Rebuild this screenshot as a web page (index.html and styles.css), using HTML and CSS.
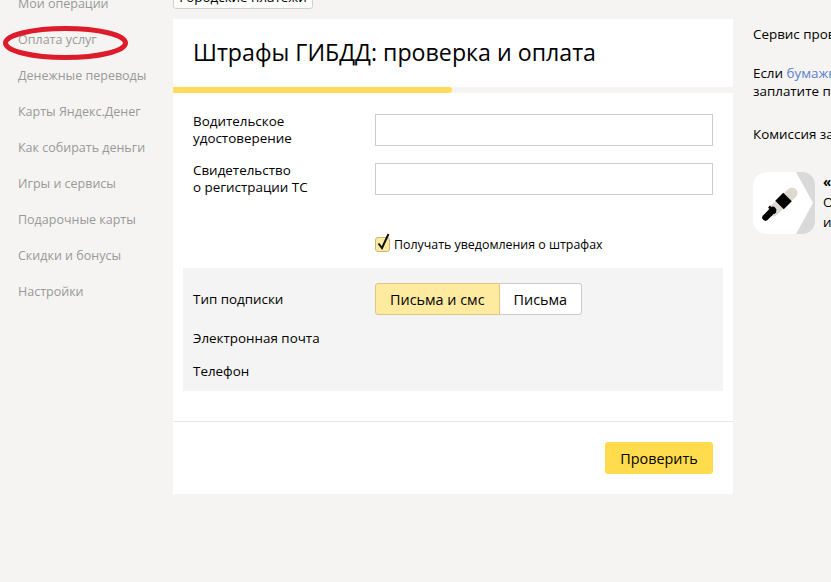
FILE: index.html
```html
<!DOCTYPE html>
<html lang="ru">
<head>
    <meta charset="UTF-8">
    <meta name="viewport" content="width=device-width, initial-scale=1.0">
    <title>Штрафы ГИБДД: проверка и оплата</title>
    <link rel="stylesheet" href="styles.css">
</head>
<body>
    <div class="page">
        <div class="sidebar">
            <a class="nav-item">Мои операции</a>
            <a class="nav-item">Оплата услуг</a>
            <a class="nav-item">Денежные переводы</a>
            <a class="nav-item">Карты Яндекс.Денег</a>
            <a class="nav-item">Как собирать деньги</a>
            <a class="nav-item">Игры и сервисы</a>
            <a class="nav-item">Подарочные карты</a>
            <a class="nav-item">Скидки и бонусы</a>
            <a class="nav-item">Настройки</a>
        </div>
        <div class="main">
            <button class="city-button">Городские платежи</button>
            <div class="card">
                <h1 class="card-title">Штрафы ГИБДД: проверка и оплата</h1>
                <div class="progress"><div class="progress-fill"></div></div>
                <div class="form">
                    <div class="form-row">
                        <label class="form-label">Водительское<br>удостоверение</label>
                        <input class="text-input" type="text">
                    </div>
                    <div class="form-row">
                        <label class="form-label">Свидетельство<br>о регистрации ТС</label>
                        <input class="text-input" type="text">
                    </div>
                    <div class="notify-row">
                        <span class="checkbox">
                            <svg viewBox="0 0 16 20" width="16" height="20" fill="none">
                                <path d="M3.5 11.5l3.5 4.5 6.5-14" stroke="#111" stroke-width="2"/>
                            </svg>
                        </span>
                        Получать уведомления о штрафах
                    </div>
                    <div class="subscribe">
                        <div class="subscribe-row">
                            <span class="subscribe-label">Тип подписки</span>
                            <div class="switch">
                                <span class="switch-item switch-item-on">Письма и смс</span>
                                <span class="switch-item">Письма</span>
                            </div>
                        </div>
                        <div class="subscribe-line">Электронная почта</div>
                        <div class="subscribe-line">Телефон</div>
                    </div>
                </div>
                <div class="card-footer">
                    <button class="submit">Проверить</button>
                </div>
            </div>
        </div>
        <div class="aside">
            <p>Сервис проверит штрафы</p>
            <p class="aside-note">Если <a class="link">бумажная</a> квитанция потеряна,<br>заплатите по номеру</p>
            <p>Комиссия за оплату</p>
            <div class="promo">
                <svg class="promo-icon" viewBox="0 0 62 62" width="62" height="62">
                    <rect width="62" height="62" rx="13" fill="#d9d9d9"/>
                    <path d="M13 0H43L60 31 43 62H13A13 13 0 0 1 0 49V13A13 13 0 0 1 13 0Z" fill="#fff"/>
                    <path d="M39 21L20 39" stroke="#dcd9d0" stroke-width="11" stroke-linecap="round"/>
                    <path d="M34.5 25L26.5 33" stroke="#000" stroke-width="12"/>
                    <path d="M20 38L12.5 45.5" stroke="#000" stroke-width="6.5" stroke-linecap="round"/>
                    <path d="M22.5 41L16 34.5" stroke="#000" stroke-width="2.5"/>
                </svg>
                <div class="promo-text">
                    <b>«Штрафы»</b><br>Оплата<br>из приложения
                </div>
            </div>
        </div>
    </div>
    <svg class="marker" viewBox="0 0 131 36" width="131" height="36" fill="none">
        <ellipse cx="65.5" cy="17" rx="60" ry="14.5" stroke="#dc1c2a" stroke-width="5"/>
    </svg>
</body>
</html>
```

FILE: styles.css
```css
* {
    box-sizing: border-box;
    margin: 0;
    padding: 0;
}

html, body {
    height: 100%;
    overflow: hidden;
}

body {
    font-family: "Open Sans", "Noto Sans", sans-serif;
    font-size: 13.4px;
    background-color: #f5f4f2;
    color: #000;
    position: relative;
}

.page {
    display: flex;
    align-items: flex-start;
    margin-top: -15px;
    width: 1100px;
}

.sidebar {
    width: 173px;
    flex-shrink: 0;
    padding: 10px 0 0 18px;
    display: flex;
    flex-direction: column;
    font-size: 12.5px;
}

.nav-item {
    height: 36px;
    line-height: 18px;
    color: #999;
}

.main {
    width: 560px;
    flex-shrink: 0;
}

.city-button {
    display: block;
    width: 140px;
    height: 24px;
    margin-bottom: 10px;
    background-color: #fff;
    border: 1px solid #d0d0d0;
    border-radius: 3px;
    font: inherit;
    color: #000;
}

.card {
    background-color: #fff;
}

.card-title {
    font-size: 23.2px;
    font-weight: 400;
    line-height: 32px;
    padding: 17px 20px 19px;
}

.progress {
    height: 6px;
    background-color: #f5f4f2;
}

.progress-fill {
    width: 279px;
    height: 100%;
    background-color: #ffdb5c;
    border-radius: 0 3px 3px 0;
}

.form {
    padding: 21px 10px 30px;
}

.form-row {
    display: flex;
    margin-bottom: 16px;
    padding: 0 10px;
}

.form-label {
    width: 182px;
    flex-shrink: 0;
    line-height: 17px;
    margin-top: -1px;
}

.text-input {
    width: 338px;
    height: 32px;
    border: 1px solid #ccc;
    background-color: #fff;
}

.notify-row {
    display: flex;
    align-items: center;
    gap: 4px;
    height: 24px;
    margin: 36px 0 12px 192px;
    font-size: 12.4px;
}

.checkbox {
    width: 15px;
    height: 15px;
    background-color: #ffeba0;
    border: 1px solid #c8b97a;
    border-radius: 3px;
    position: relative;
}

.checkbox svg {
    position: absolute;
    left: -1px;
    top: -6px;
}

.subscribe {
    background-color: #f4f4f4;
    padding: 15px 10px 3px;
}

.subscribe-row {
    display: flex;
    align-items: center;
    margin-bottom: 7px;
}

.subscribe-label {
    width: 182px;
    flex-shrink: 0;
}

.switch {
    display: flex;
    height: 32px;
    font-size: 14.4px;
}

.switch-item {
    display: flex;
    align-items: center;
    padding: 0 14px;
    background-color: #fff;
    border: 1px solid #ccc;
    border-left: none;
    border-radius: 0 3px 3px 0;
}

.switch-item-on {
    padding: 0 14px;
    background-color: #ffeba0;
    border: 1px solid #d9c783;
    border-radius: 3px 0 0 3px;
}

.subscribe-line {
    height: 33px;
    line-height: 33px;
}

.card-footer {
    border-top: 1px solid #e5e5e5;
    padding: 20px;
    display: flex;
    justify-content: flex-end;
}

.submit {
    width: 108px;
    height: 32px;
    background-color: #ffdb4d;
    border: none;
    border-radius: 3px;
    font: inherit;
    font-size: 14.4px;
    color: #000;
}

.aside {
    padding: 40px 0 0 20px;
    white-space: nowrap;
    line-height: 18px;
}

.aside p {
    margin-bottom: 21px;
}

.aside .aside-note {
    margin-bottom: 25px;
}

.link {
    color: #5b7fc7;
}

.promo {
    display: flex;
    gap: 8px;
    margin-top: 29px;
}

.promo-text {
    line-height: 20px;
}

.marker {
    position: absolute;
    left: 0;
    top: 26px;
}
```
